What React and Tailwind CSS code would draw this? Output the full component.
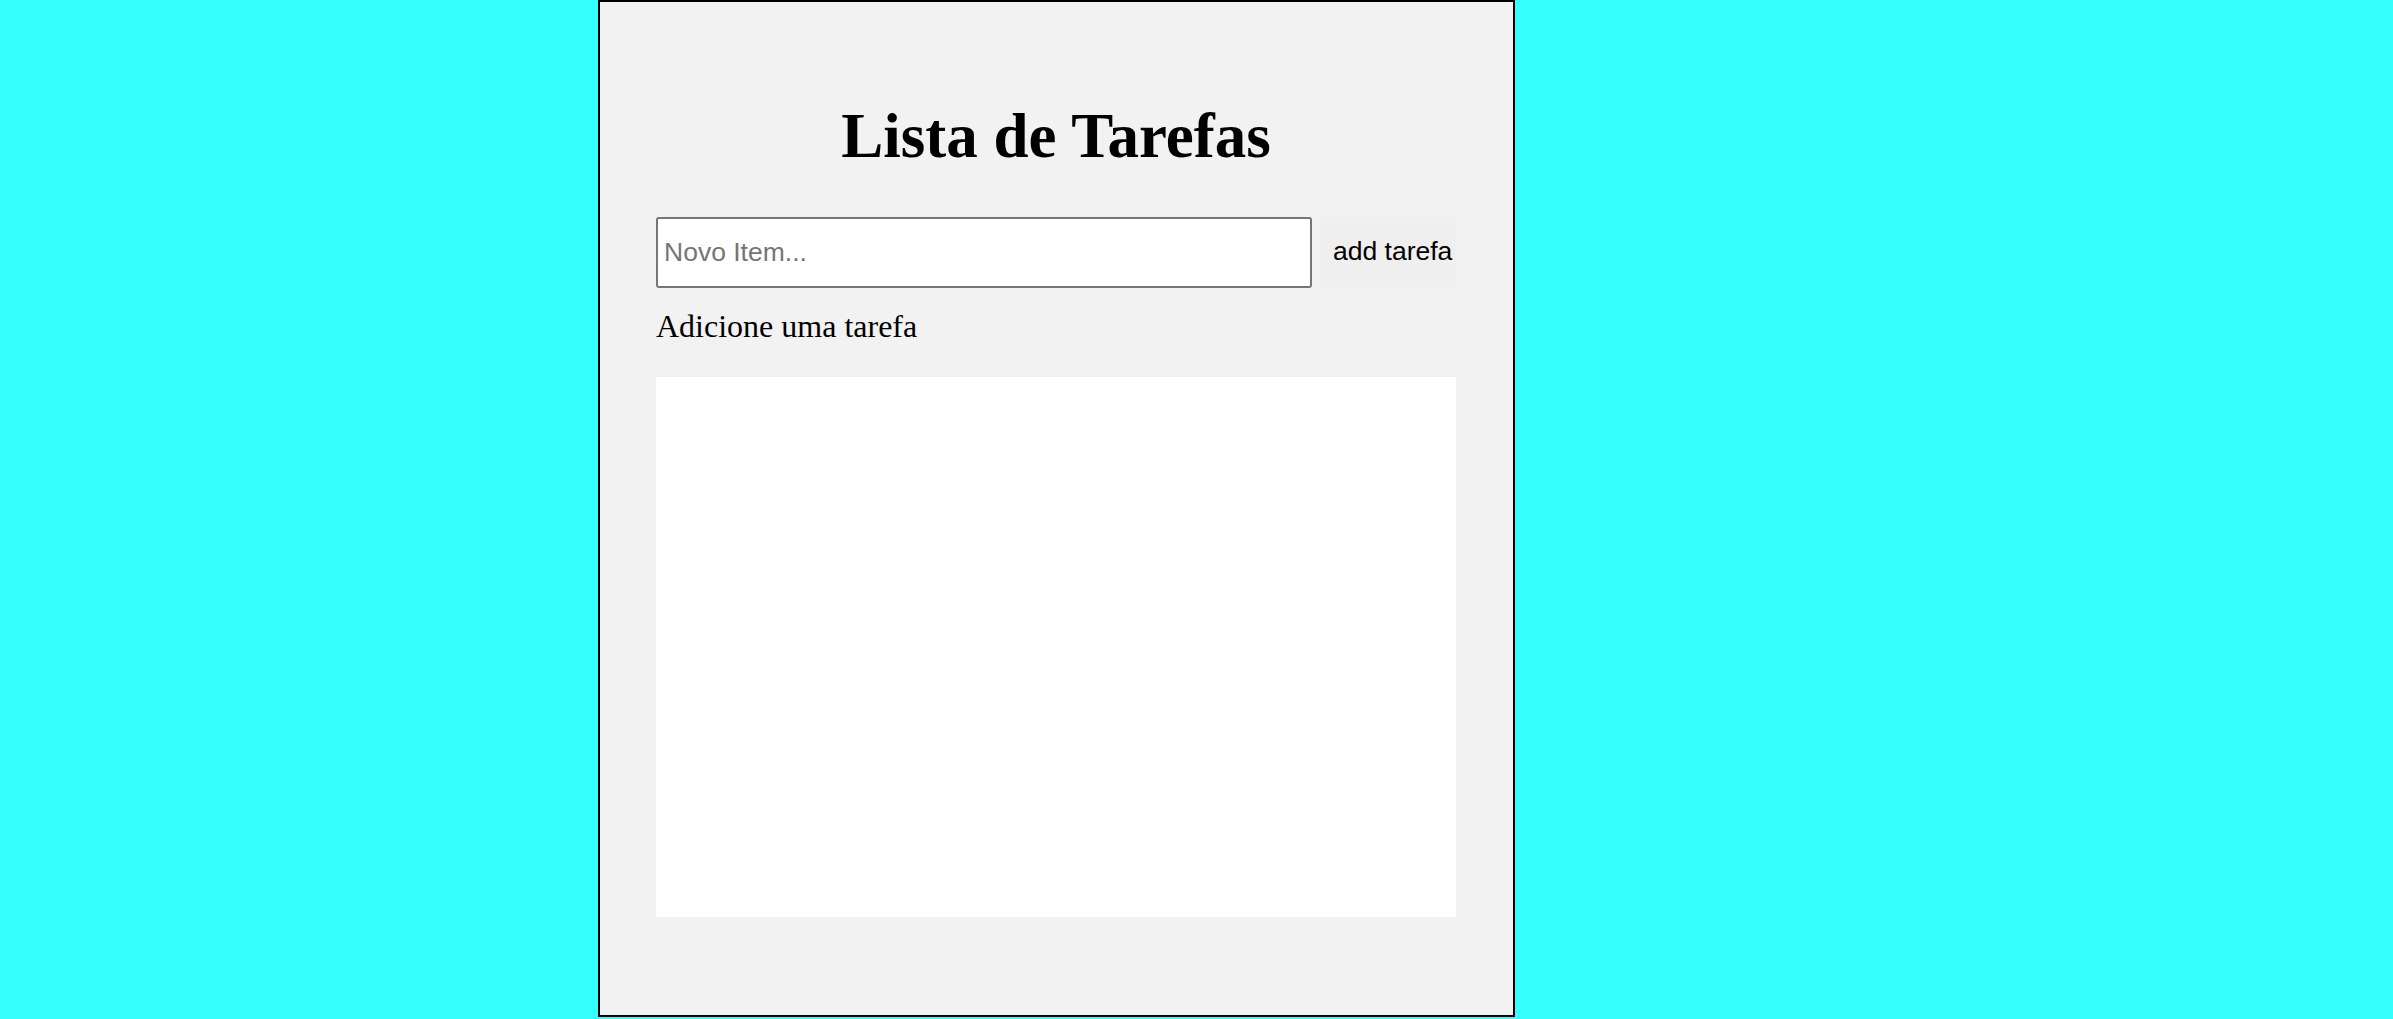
export default function App() {
  return (
    <div className="min-h-[1019px] bg-[#33ffff]">
      <div className="ml-[598px] flex h-[1017px] w-[917px] flex-col border-2 border-black bg-[#f2f2f2] pb-[98px] pl-[56px] pr-[57px] pt-[103px]">
        <h1 className="text-center font-['Liberation_Serif',serif] text-[63px] font-bold leading-[63px] text-black">
          Lista de Tarefas
        </h1>
        <div className="mt-[49px] flex gap-[8px]">
          <input
            type="text"
            placeholder="Novo Item..."
            className="h-[71px] w-[656px] rounded-[3px] border-2 border-[#767676] bg-white pl-[6px] font-['Liberation_Sans',sans-serif] text-[26.5px] text-black outline-none placeholder:text-[#757575]"
          />
          <button
            type="button"
            className="h-[70px] w-[136px] bg-[#efefef] pl-[13px] text-left font-['Liberation_Sans',sans-serif] text-[26.5px] text-black"
          >
            add tarefa
          </button>
        </div>
        <p className="mt-[22px] font-['Liberation_Serif',serif] text-[32px] leading-[32px] text-black">
          Adicione uma tarefa
        </p>
        <div className="mt-[35px] h-[540px] w-[800px] bg-white"></div>
      </div>
    </div>
  );
}
